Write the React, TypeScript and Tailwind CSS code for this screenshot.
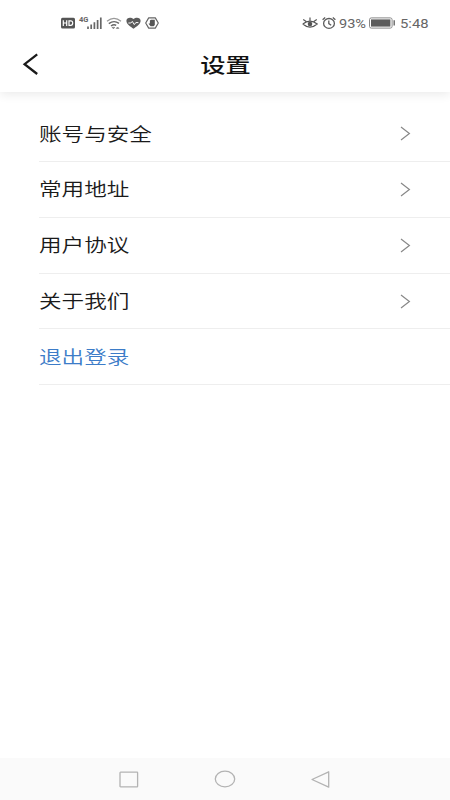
const menuItems = [
  { id: "account", label: "账号与安全" },
  { id: "address", label: "常用地址" },
  { id: "agreement", label: "用户协议" },
  { id: "about", label: "关于我们" },
];

const StatusBar = () => {
  return (
    <div className="flex h-[46px] items-center pl-[61px] pr-[21px] text-[#666666]">
      <svg width="14" height="12" viewBox="0 0 14 12" className="mr-1">
        <rect x="0" y="0.8" width="14" height="10.6" rx="1.5" fill="#555555" />
        <path d="M2.3 3.2v5.8M5.7 3.2v5.8M2.3 6h3.4M8 3.8v4.6h1.7q2 0 2-2.3t-2-2.3z" fill="none" stroke="#fff" strokeWidth="1.2" />
      </svg>
      <span className="mb-[6px] w-[8px] text-[7.5px] font-bold leading-none">4G</span>
      <svg width="15" height="12" viewBox="0 0 15 12" className="mr-1">
        <path d="M1 9.6V12M4.2 7.6V12M7.4 5.3V12M10.6 3V12M13.8 0.6V12" stroke="#666666" strokeWidth="1.7" />
      </svg>
      <svg width="16" height="12" viewBox="0 0 16 12" className="mr-1" fill="none" stroke="#666666" strokeWidth="1.4">
        <path d="M1 4.2Q8-1.6 15 4.2" stroke="#999999" strokeWidth="1.2" />
        <path d="M2.8 6.6Q8 2.8 13 6.4M5 9Q7.8 6.8 10.2 8.4" />
        <path d="M6.2 10.4h2.4l-1.2 1.4zM10.4 11.4h2.4l-1.2-1.4z" strokeWidth="0.8" />
      </svg>
      <svg width="15" height="12" viewBox="0 0 15 12" className="mr-1">
        <path d="M7.5 11.8C4.5 9.5.4 7.4.4 3.8.4.3 5-.2 7.5 2 10-.2 14.6.3 14.6 3.8c0 3.6-4.1 5.7-7.1 8z" fill="#5c5c5c" />
        <path d="M2.4 6h2.4l1.5-1.6 2 3.2 1.5-2h2.6" fill="none" stroke="#fff" strokeWidth="1" />
      </svg>
      <svg width="14" height="12" viewBox="0 0 14 12">
        <path d="M3.7.9h6.6L13.3 6l-3 5.1H3.7L.7 6z" fill="none" stroke="#666666" strokeWidth="1.2" strokeLinejoin="round" />
        <path d="M4.9 3.6L6 2.7h3.8v5.2L8.6 9.2H5.6L3.6 6.8l.5-.6.8.5z" fill="#555555" />
      </svg>
      <div className="ml-auto flex items-center">
        <svg width="16" height="12" viewBox="0 0 16 12" className="mr-[4px]" fill="none" stroke="#555555" strokeWidth="1.2">
          <path d="M.8 7Q8 1.2 15.2 7Q8 13.2 .8 7M8 3.4V.4M4.2 4.4L1.2 2.6M11.8 4.4L14.8 2.6" />
          <circle cx="8" cy="7" r="1.7" fill="#555555" />
        </svg>
        <svg width="14" height="12" viewBox="0 0 14 12" className="mr-[3px]" fill="none" stroke="#5c5c5c" strokeWidth="1.3">
          <ellipse cx="7" cy="6.4" rx="5.4" ry="4.9" />
          <path d="M6.8 3.4v3.2l2.4 1.7M.6 2.8L3.2.6M13.4 2.8L10.8.6" />
        </svg>
        <span className="mt-px w-[28px] whitespace-nowrap text-[13px] leading-none">
          <span className="inline-block origin-left scale-x-[1.12]">93%</span>
        </span>
        <svg width="27" height="12" viewBox="0 0 27 12" className="ml-[2px] mr-[4px]">
          <rect x="0.5" y="0.9" width="22.6" height="10.2" rx="1.8" fill="none" stroke="#888888" />
          <rect x="2" y="2.4" width="19.4" height="7.2" fill="#5c5c5c" />
          <path d="M25.2 3.2v5.4" stroke="#666666" strokeWidth="1.4" />
        </svg>
        <span className="mt-px w-[29px] whitespace-nowrap text-[13px] leading-none">
          <span className="inline-block origin-left scale-x-[1.14]">5:48</span>
        </span>
      </div>
    </div>
  );
};

const Header = () => {
  return (
    <header className="bg-white shadow-[0_2px_10px_rgba(0,0,0,0.09)]">
      <StatusBar />
      <div className="grid h-[46px] grid-cols-[1fr_auto_1fr] items-start">
        <button className="ml-[22px] mt-[7px] w-[18px]">
          <svg width="18" height="22" viewBox="0 0 18 22" fill="none" stroke="#1a1a1a" strokeWidth="2.3">
            <path d="M15.2 1.4L2.6 11.2L15.2 21" />
          </svg>
        </button>
        <h1 className="mt-[5px] scale-x-[1.23] text-[20.5px] font-medium leading-[30px] text-[#111111]">
          设置
        </h1>
      </div>
    </header>
  );
};

const MenuRow = ({ label }: { label: string }) => {
  return (
    <li className="flex h-[55.75px] items-center justify-between border-b border-[#eeeeee] pr-[39px]">
      <span className="origin-left scale-x-[1.235] pt-px text-[18.3px] font-[350] text-[#1a1a1a]">
        {label}
      </span>
      <svg width="11" height="15" viewBox="0 0 11 15" fill="none" stroke="#888888" strokeWidth="1.2">
        <path d="M1 1L9.4 7.5L1 14" />
      </svg>
    </li>
  );
};

const NavBar = () => {
  return (
    <nav className="flex h-[42px] items-center justify-between bg-[#fafafa] pl-[119px] pr-[120px]">
      <svg width="20" height="17" viewBox="0 0 20 17" fill="none" stroke="#b3b3b3" strokeWidth="1.3">
        <rect x="1" y="1.2" width="17.6" height="14.6" rx="0.6" />
      </svg>
      <svg width="22" height="18" viewBox="0 0 22 18" fill="none" stroke="#b3b3b3" strokeWidth="1.3">
        <ellipse cx="11" cy="9" rx="9.7" ry="7.9" />
      </svg>
      <svg width="19" height="17" viewBox="0 0 19 17" fill="none" stroke="#b3b3b3" strokeWidth="1.3" strokeLinejoin="round">
        <path d="M17.7 .8v15.4L1 8.5z" />
      </svg>
    </nav>
  );
};

export default function App() {
  return (
    <div className="flex h-[800px] w-[450px] flex-col overflow-hidden bg-white font-[Roboto,'Noto_Sans_CJK_SC',sans-serif]">
      <Header />
      <main className="flex-1 pl-[39px] pt-[14.4px]">
        <ul>
          {menuItems.map((item) => (
            <MenuRow key={item.id} label={item.label} />
          ))}
          <li className="flex h-[55.75px] items-center border-b border-[#eeeeee]">
            <button className="origin-left scale-x-[1.235] pt-px text-[18.3px] font-[350] text-[#3c7cc8]">
              退出登录
            </button>
          </li>
        </ul>
      </main>
      <NavBar />
    </div>
  );
}
